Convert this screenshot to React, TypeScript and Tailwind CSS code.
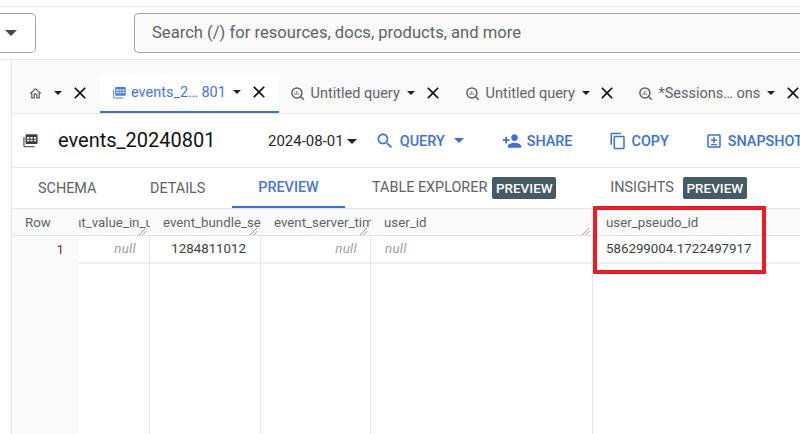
import React from "react";

const P = ({ d, c = "", s = 24, v = "0 0 24 24" }: { d: string; c?: string; s?: number; v?: string }) => (
  <svg width={s} height={s} viewBox={v} fill="currentColor" className={c}>
    <path d={d} />
  </svg>
);

const CLOSE = "M19 6.41L17.59 5 12 10.59 6.41 5 5 6.41 10.59 12 5 17.59 6.41 19 12 13.41 17.59 19 19 17.59 13.41 12z";
const HOME = "M12 5.69l5 4.5V18h-2v-6H9v6H7v-7.81l5-4.5M12 3L2 12h3v8h6v-6h2v6h6v-8h3L12 3z";
const SEARCH = "M15.5 14h-.79l-.28-.27C15.41 12.59 16 11.11 16 9.5 16 5.91 13.09 3 9.5 3S3 5.91 3 9.5 5.91 16 9.5 16c1.61 0 3.09-.59 4.23-1.57l.27.28v.79l5 4.99L20.49 19l-4.99-5zm-6 0C7.01 14 5 11.99 5 9.5S7.01 5 9.5 5 14 7.01 14 9.5 11.99 14 9.5 14z";
const SHARE = "M15 12c2.21 0 4-1.79 4-4s-1.79-4-4-4-4 1.79-4 4 1.79 4 4 4zm-9-2V7H4v3H1v2h3v3h2v-3h3v-2H6zm9 4c-2.67 0-8 1.34-8 4v2h16v-2c0-2.66-5.33-4-8-4z";
const COPY = "M16 1H4c-1.1 0-2 .9-2 2v14h2V3h12V1zm3 4H8c-1.1 0-2 .9-2 2v14c0 1.1.9 2 2 2h11c1.1 0 2-.9 2-2V7c0-1.1-.9-2-2-2zm0 16H8V7h11v14z";
const SNAP = "M5 3h14c1.1 0 2 .9 2 2v14c0 1.1-.9 2-2 2H5c-1.1 0-2-.9-2-2V5c0-1.1.9-2 2-2zm0 2v14h14V5H5zm6 2h2v3h3v2h-3v3h-2v-3H8v-2h3V7zm-3 9h8v1.5H8V16z";
const TABLE = "M7 3h13c1.1 0 2 .9 2 2v10c0 1.1-.9 2-2 2H7c-1.1 0-2-.9-2-2V5c0-1.1.9-2 2-2zm0 4v2.5h3.5V7H7zm5 0v2.5h3V7h-3zm5 0v2.5h3V7h-3zM7 11v2h3.5v-2H7zm5 0v2h3v-2h-3zm5 0v2h3v-2h-3zM2 7h1.5v12c0 .6.4 1 1 1H18v1.5H4c-1.1 0-2-.9-2-2V7z";

const Caret = ({ w = 8, h = 4, c = "" }: { w?: number; h?: number; c?: string }) => (
  <svg width={w} height={h} viewBox="0 0 8 4" preserveAspectRatio="none" fill="currentColor" className={c}>
    <path d="M0 0h8L4 4z" />
  </svg>
);

const QueryIcon = () => (
  <svg width="15" height="15" viewBox="0 0 24 24" fill="none" stroke="#5f6368" strokeWidth="2.4" className="shrink-0">
    <circle cx="11" cy="11" r="8" />
    <path d="M17 17l5 5" />
    <path d="M8 14v-3M11 14V8M14 14v-2" strokeWidth="1.6" />
  </svg>
);

const Tab = ({ w, label, close }: { w: number; label: string; close: string }) => (
  <div className="flex items-center shrink-0 h-full" style={{ width: w }}>
    <QueryIcon />
    <span className="ml-[5.5px] pt-[1px] text-[14.5px] text-[#5f6368] whitespace-nowrap">{label}</span>
    <Caret w={8} h={4} c="text-[#202124] ml-[7px] shrink-0" />
    <P d={CLOSE} s={20} c={`text-[#111] shrink-0 ${close}`} />
  </div>
);

const Action = ({ d, label, c = "", s = 20 }: { d: string; label: string; c?: string; s?: number }) => (
  <div className={`flex items-center text-[#3f6fd8] shrink-0 mt-[3px] ${c}`}>
    <P d={d} s={s} />
    <span className="ml-[5px] text-[14.4px] font-medium whitespace-nowrap">{label}</span>
  </div>
);

const Badge = ({ c }: { c: string }) => (
  <span className={`flex items-center justify-center w-[64px] h-[22px] rounded-[2px] bg-[#455a64] text-white text-[13.5px] font-medium ${c}`}>
    PREVIEW
  </span>
);

const Grip = () => (
  <svg width="8" height="8" viewBox="0 0 8 8" fill="none" stroke="#80868b" strokeWidth="0.8" className="absolute right-[3px] bottom-0">
    <path d="M0 8L7 1M3.5 8L7.5 4" />
  </svg>
);

const H = ({ w, label, indent = "pl-[13px]", grip = true }: { w: number; label: string; indent?: string; grip?: boolean }) => (
  <div className={`relative h-full shrink-0 flex items-center overflow-hidden whitespace-nowrap pt-[1px] ${indent}`} style={{ width: w }}>
    {label}
    {grip && <Grip />}
  </div>
);

const Column = ({ w, children, align = "justify-end pr-[13px]", end = true }: { w: number; children?: React.ReactNode; align?: string; end?: boolean }) => (
  <div className={`shrink-0 h-full ${end ? "border-r border-[#e6e6e6]" : ""}`} style={{ width: w }}>
    <div className={`h-[28px] flex items-center border-b-2 border-[#eeeeee] text-[13.3px] ${align}`}>{children}</div>
  </div>
);

const Null = () => <i className="text-[#9aa0a6] text-[13.3px] tracking-[0.3px]">null</i>;

export default function App() {
  return (
    <div className="relative w-[800px] h-[434px] overflow-hidden bg-white font-['Roboto',sans-serif] text-[#202124]">
      {/* top bar */}
      <div className="h-[60px] pt-[6px] border-b border-[#e8e8e8]">
        <div className="h-[53px] border-t border-[#e8e8e8] flex items-start pt-[6px]">
          <div className="w-[36px] h-[40px] border border-l-0 border-[#a0a4a8] rounded-r-[5px] flex items-center justify-start pl-[5px] shrink-0">
            <Caret w={12} h={6} c="text-[#45494d]" />
          </div>
          <div className="ml-[98px] flex-1 h-[40px] border border-r-0 border-[#a0a4a8] rounded-l-[5px] bg-[#fafafa] flex items-center pl-[17px] pt-[1px] text-[16.6px] text-[#5f6368] whitespace-nowrap">
            Search (/) for resources, docs, products, and more
          </div>
        </div>
      </div>

      <div className="flex h-[374px]">
        {/* left rail */}
        <div className="w-[12px] shrink-0 border-r border-[#e4e4e4] bg-white" />
        <div className="flex-1 min-w-0 flex flex-col">
          {/* open tabs */}
          <div className="h-[54px] shrink-0 bg-[#fafafa] border-b border-[#e6e6e6] flex items-start overflow-hidden">
            <div className="h-[53px] w-[88px] shrink-0 flex items-center pt-[13px] pl-[16px]">
              <P d={HOME} s={15} c="text-[#5f6368]" />
              <Caret w={8} h={4} c="text-[#202124] ml-[11px]" />
              <P d={CLOSE} s={20} c="text-[#111] ml-[8px]" />
            </div>
            <div className="mt-[13px] h-[40px] w-[179px] shrink-0 bg-white rounded-t-[4px] border-b-2 border-[#3f6fd8] flex items-center pl-[12px]">
              <P d={TABLE} s={15} c="text-[#4f7fe0]" />
              <span className="ml-[4px] pt-[1px] text-[14.5px] text-[#4a76d8] whitespace-nowrap">events_2… 801</span>
              <Caret w={8} h={4} c="text-[#202124] ml-[7px]" />
              <P d={CLOSE} s={20} c="text-[#111] ml-[8px]" />
            </div>
            <div className="mt-[13px] h-[40px] ml-[11px] flex items-center">
              <Tab w={175} label="Untitled query" close="ml-[8px]" />
              <Tab w={173} label="Untitled query" close="ml-[7px]" />
              <Tab w={170} label="*Sessions… ons" close="ml-[8px]" />
            </div>
          </div>

          {/* title row */}
          <div className="h-[54px] shrink-0 border-b border-[#e4e4e4] flex items-center pl-[10px] pb-[1px] overflow-hidden">
            <P d={TABLE} s={17} c="text-[#3c4043] shrink-0" />
            <span className="ml-[19px] text-[20px] text-[#111] whitespace-nowrap w-[155px] shrink-0">events_20240801</span>
            <span className="ml-[55px] mt-[2px] text-[15px] text-[#27292c] shrink-0">2024-08-01</span>
            <Caret w={10} h={5} c="text-[#202124] ml-[3px] mt-[2px] shrink-0" />
            <Action d={SEARCH} label="QUERY" c="ml-[18px]" />
            <Caret w={10} h={5} c="text-[#3f6fd8] ml-[9px] shrink-0" />
            <Action d={SHARE} label="SHARE" c="ml-[38px]" />
            <Action d={COPY} label="COPY" c="ml-[36px]" s={18} />
            <Action d={SNAP} label="SNAPSHOT" c="ml-[36px]" s={18} />
          </div>

          {/* sub tabs */}
          <div className="h-[40px] shrink-0 flex text-[14.4px] text-[#5f6368] overflow-hidden">
            <div className="w-[26px] shrink-0" />
            <div className="w-[112px] shrink-0 flex items-center pt-[1px]">SCHEMA</div>
            <div className="w-[82px] shrink-0 flex items-center pt-[1px]">DETAILS</div>
            <div className="w-[113px] shrink-0 flex items-center justify-center pt-[1px] text-[#4a76d8] font-medium border-b-2 border-[#3f6fd8]">PREVIEW</div>
            <div className="ml-[27px] shrink-0 flex items-center">
              TABLE EXPLORER
              <Badge c="ml-[5px]" />
            </div>
            <div className="ml-[54px] shrink-0 flex items-center">
              INSIGHTS
              <Badge c="ml-[9px]" />
            </div>
          </div>

          {/* table */}
          <div className="flex-1 min-h-0 flex flex-col border-t border-[#e8e8e8]">
            <div className="h-[27px] shrink-0 bg-[#fafafa] border-b border-[#e0e0e0] flex text-[13.3px] text-[#5f6368]">
              <H w={67} label="Row" grip={false} />
              <div className="relative w-[71px] h-full shrink-0 flex items-center pt-[1px] overflow-hidden whitespace-nowrap">
                <span className="ml-[-5px]">nt_value_in_u</span>
                <Grip />
              </div>
              <H w={111} label="event_bundle_se" />
              <H w={110} label="event_server_tim" />
              <H w={222} label="user_id" />
              <H w={208} label="user_pseudo_id" grip={false} />
            </div>
            <div className="flex-1 min-h-0 flex">
              <div className="w-[67px] shrink-0 bg-[#fafafa] h-full">
                <div className="h-[27px] flex items-center justify-end pr-[15px] text-[13.3px] text-[#7a2e22]">1</div>
              </div>
              <Column w={71}><Null /></Column>
              <Column w={111} align="justify-end pr-[14px] text-[#3c4043]">1284811012</Column>
              <Column w={110}><Null /></Column>
              <Column w={222} align="justify-start pl-[14px]"><Null /></Column>
              <Column w={208} end={false} align="justify-start pl-[13px] text-[#3c4043]">586299004.1722497917</Column>
            </div>
          </div>
        </div>
      </div>

      {/* annotation box drawn over the screenshot */}
      <div className="absolute left-[593px] top-[206px] w-[173px] h-[68px] border-[4px] border-[#ed1c24]" />
    </div>
  );
}
